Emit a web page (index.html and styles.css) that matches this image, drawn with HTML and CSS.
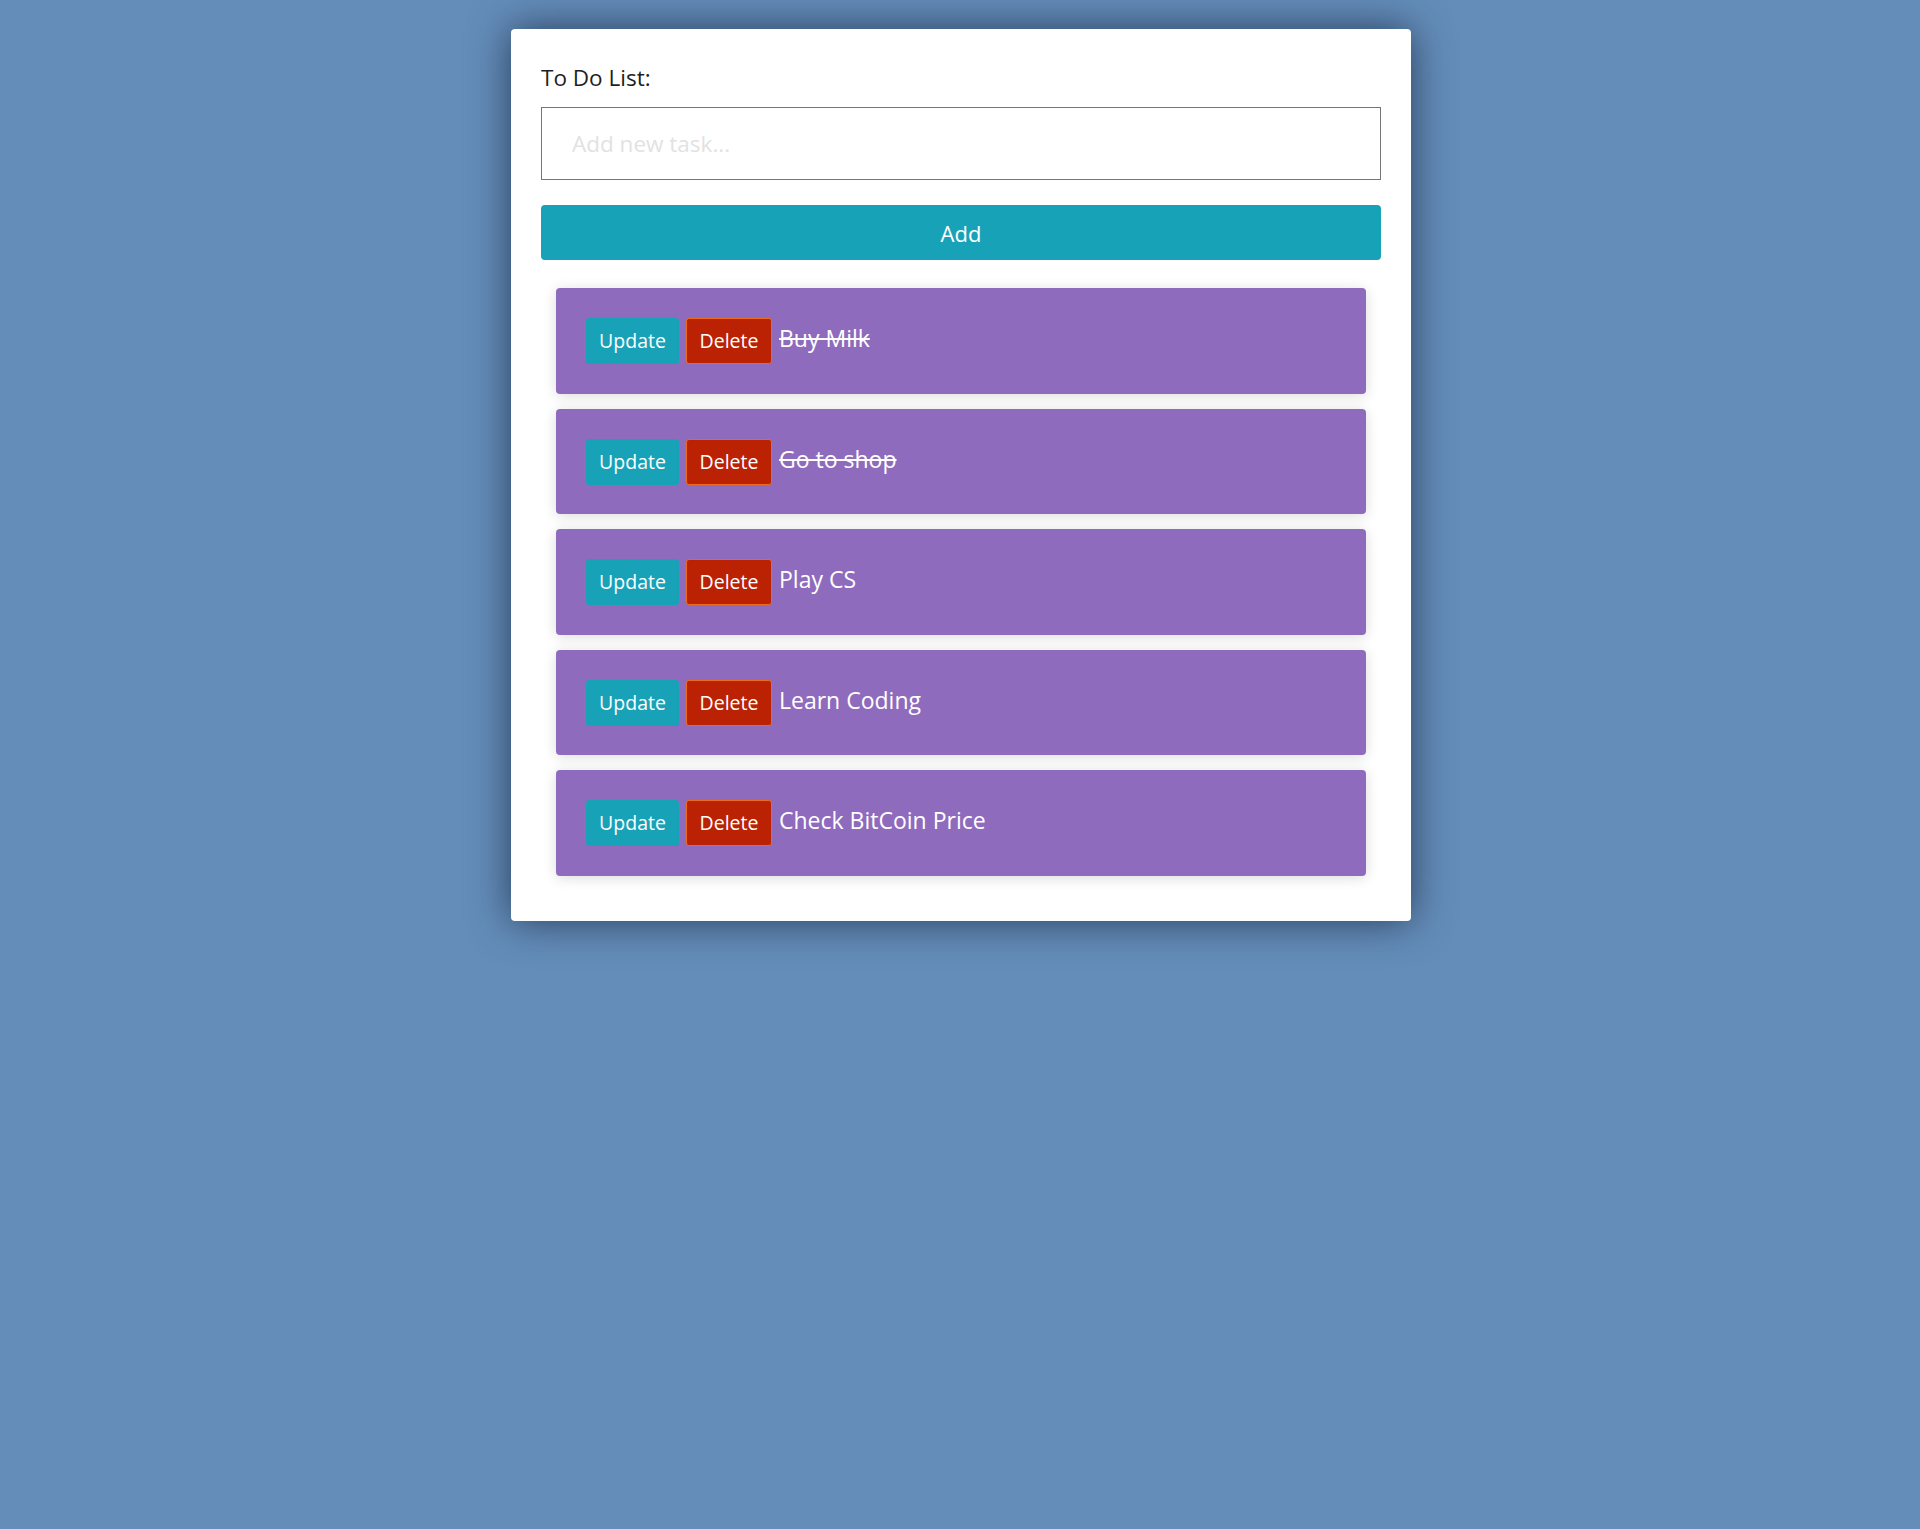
FILE: index.html
```html
<!DOCTYPE html>
<html lang="en">
<head>
<meta charset="utf-8">
<title>To Do List</title>
<link rel="stylesheet" href="styles.css">
</head>
<body>
<div class="card">
  <label class="title" for="task">To Do List:</label>
  <input id="task" class="task-input" type="text" placeholder="Add new task...">
  <button class="add-btn">Add</button>
  <ul class="list">
    <li class="item">
      <button class="btn btn-update">Update</button><button class="btn btn-delete">Delete</button><span class="task done">Buy Milk</span>
    </li>
    <li class="item">
      <button class="btn btn-update">Update</button><button class="btn btn-delete">Delete</button><span class="task done">Go to shop</span>
    </li>
    <li class="item">
      <button class="btn btn-update">Update</button><button class="btn btn-delete">Delete</button><span class="task">Play CS</span>
    </li>
    <li class="item">
      <button class="btn btn-update">Update</button><button class="btn btn-delete">Delete</button><span class="task">Learn Coding</span>
    </li>
    <li class="item">
      <button class="btn btn-update">Update</button><button class="btn btn-delete">Delete</button><span class="task">Check BitCoin Price</span>
    </li>
  </ul>
</div>
</body>
</html>
```

FILE: styles.css
```css
* { box-sizing: border-box; }

html, body {
  margin: 0;
  padding: 0;
}

body {
  background: #648db9;
  min-height: 100vh;
  font-family: "Open Sans", "Noto Sans", sans-serif;
  color: #212529;
  padding-top: 29px;
  padding-left: 2px;
}

.card {
  width: 900px;
  margin: 0 auto;
  background: #ffffff;
  border-radius: 4px;
  padding: 30px;
  box-shadow: 0 0 40px rgba(20, 35, 60, 0.75);
  display: flex;
  flex-direction: column;
}

.title {
  font-size: 22.5px;
  line-height: 30px;
  margin-top: 4px;
  color: #1e1e1e;
}

.task-input {
  margin-top: 14px;
  height: 73px;
  border: 1px solid #767676;
  border-radius: 0;
  padding: 0 30px;
  font-family: inherit;
  font-size: 22.5px;
  color: #333;
  outline: none;
}

.task-input::placeholder {
  color: #e2e2e2;
}

.add-btn {
  margin-top: 25px;
  height: 55px;
  border: none;
  border-radius: 4px;
  background: #18a2b8;
  color: #ffffff;
  font-family: inherit;
  font-size: 22px;
}

.list {
  list-style: none;
  margin: 28px 0 0;
  padding: 0 15px;
}

.item {
  background: #8f6bbd;
  border-radius: 4px;
  padding: 30px;
  height: 105.6px;
  margin-bottom: 15px;
  box-shadow: 0 2px 14px rgba(0, 0, 0, 0.14);
  display: flex;
  align-items: flex-start;
}

.btn {
  height: 46px;
  border-radius: 3px;
  font-family: inherit;
  font-size: 19.5px;
  color: #ffffff;
  padding: 0;
  margin-right: 7px;
  line-height: 44px;
}

.btn-update {
  background: #18a2b8;
  border: 1px solid #18a2b8;
  width: 93px;
}

.btn-delete {
  background: #bb2204;
  border: 1px solid #ee6a1a;
  width: 86px;
}

.task {
  color: #ffffff;
  font-size: 23px;
  line-height: 40px;
}

.task.done {
  text-decoration: line-through;
}
```
